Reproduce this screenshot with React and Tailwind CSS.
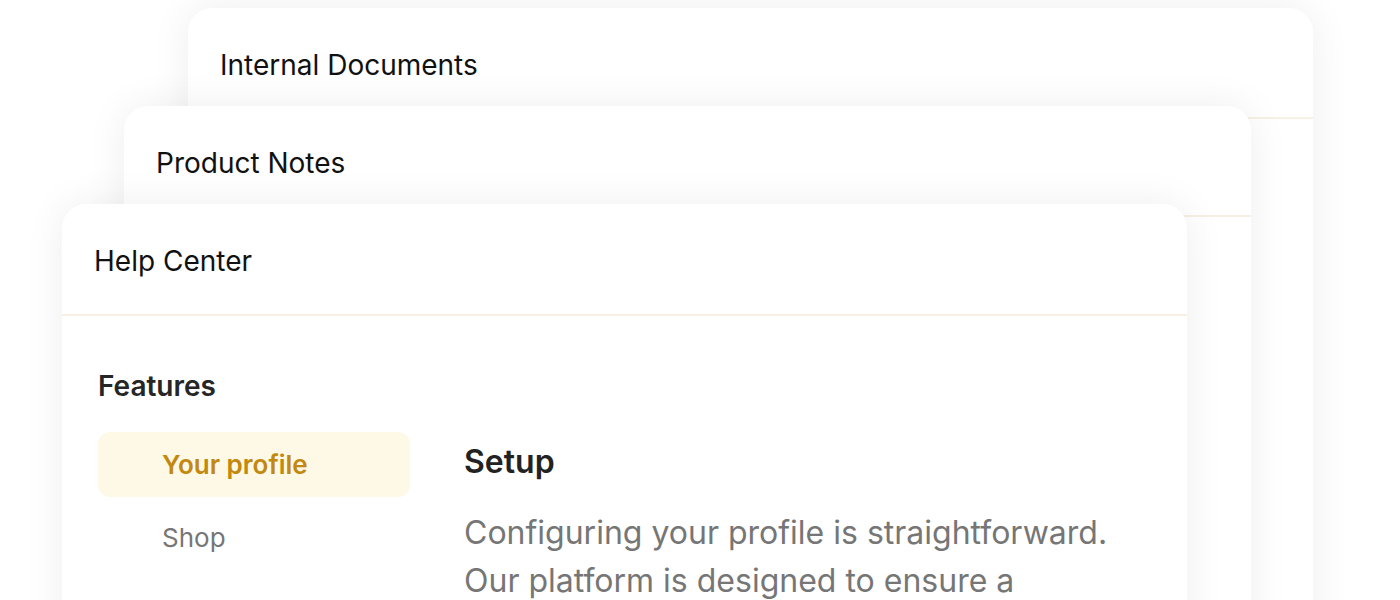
export default function App() {
  const cardShadow = "shadow-[0_0_40px_rgba(0,0,0,0.07)]"
  return (
    <div className="relative h-[600px] w-[1400px] overflow-hidden bg-white font-['Inter',sans-serif]">
      <div className={`absolute left-[188px] top-[8px] h-[700px] w-[1125px] rounded-[24px] bg-white ${cardShadow}`}>
        <div className="flex h-[111px] items-center border-b-2 border-[#f6f1e4] px-8 pt-1">
          <p className="text-[28px] text-[#111]">Internal Documents</p>
        </div>
      </div>

      <div className={`absolute left-[124px] top-[106px] h-[700px] w-[1127px] rounded-[24px] bg-white ${cardShadow}`}>
        <div className="flex h-[111px] items-center border-b-2 border-[#f6f1e4] px-8 pt-1">
          <p className="text-[28px] text-[#111]">Product Notes</p>
        </div>
      </div>

      <div className={`absolute left-[62px] top-[204px] h-[700px] w-[1125px] rounded-[24px] bg-white ${cardShadow}`}>
        <div className="flex h-[112px] items-center border-b-2 border-[#f6f1e4] px-8 pt-1">
          <p className="text-[28px] text-[#111]">Help Center</p>
        </div>

        <div className="px-9 pt-[49px]">
          <p className="text-[28px] font-semibold text-[#262626]">Features</p>
          <div className="mt-[25px] flex gap-[54px]">
            <div className="flex w-[312px] flex-col gap-2">
              <div className="flex h-[65px] items-center rounded-[12px] bg-[#fef8e6] pl-16">
                <span className="text-[26px] font-semibold text-[#c2880f]">Your profile</span>
              </div>
              <div className="flex h-[65px] items-center pl-16">
                <span className="text-[26px] text-[#767676]">Shop</span>
              </div>
            </div>
            <div className="flex-1 pt-[6px]">
              <p className="text-[32px] leading-[48px] font-semibold text-[#222]">Setup</p>
              <p className="mt-[23px] w-[660px] text-[32px] leading-[48px] text-[#767676]">
                Configuring your profile is straightforward. Our platform is designed to ensure a seamless experience from the very first step.
              </p>
            </div>
          </div>
        </div>
      </div>
    </div>
  )
}
